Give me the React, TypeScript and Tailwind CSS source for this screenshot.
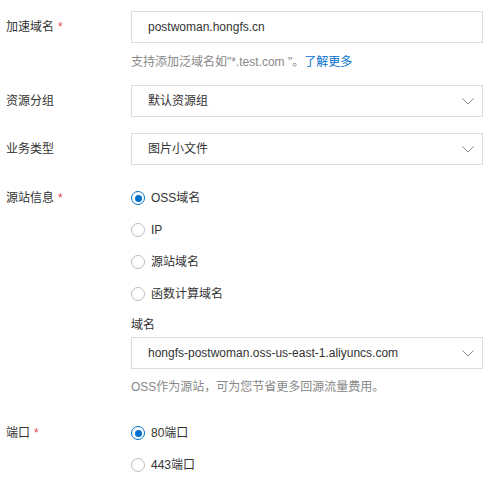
import { useState } from 'react';

const font = { fontFamily: '"Segoe UI", "Liberation Sans", "Noto Sans CJK SC", sans-serif' };

function Chevron() {
    return (
        <svg width="12" height="7" viewBox="0 0 12 7" className="text-[#8a8a8a]">
            <polyline points="0.5,0.5 6,6 11.5,0.5" fill="none" stroke="currentColor" strokeWidth="1" />
        </svg>
    );
}

function Label({ text, required }: { text: string; required?: boolean }) {
    return (
        <div className="w-[125px] shrink-0 h-8 flex items-center text-[12px] text-[#333]">
            {text}
            {required && <span className="ml-1 text-[#e5484d]">*</span>}
        </div>
    );
}

function Select({ value }: { value: string }) {
    return (
        <div className="h-8 w-[352px] border border-[#dcdcdc] bg-white flex items-center justify-between pl-4 pr-[8px] text-[12px] text-[#333]">
            <span>{value}</span>
            <Chevron />
        </div>
    );
}

function Radio({ label, checked, onClick }: { label: string; checked: boolean; onClick: () => void }) {
    return (
        <div onClick={onClick} className="h-8 flex items-center gap-[6px] text-[12px] text-[#333] cursor-pointer">
            <span className={`w-[14px] h-[14px] rounded-full border flex items-center justify-center ${checked ? 'border-[#0070cc] border-[1.5px]' : 'border-[#bdbdbd]'}`}>
                {checked && <span className="w-[7px] h-[7px] rounded-full bg-[#0070cc]" />}
            </span>
            {label}
        </div>
    );
}

export default function App() {
    const [origin, setOrigin] = useState('OSS域名');
    const [port, setPort] = useState('80端口');

    return (
        <div className="w-[500px] h-[480px] bg-white pl-[6px] pt-[11px] overflow-hidden" style={font}>
            {/* 加速域名 */}
            <div className="flex">
                <Label text="加速域名" required />
                <div>
                    <div className="h-8 w-[352px] border border-[#dcdcdc] flex items-center pl-4 text-[12px] text-[#333]">
                        postwoman.hongfs.cn
                    </div>
                    <div className="mt-[10px] leading-[18px] text-[12px] text-[#888]">
                        支持添加泛域名如"*.test.com "。<a className="text-[#0070cc]">了解更多</a>
                    </div>
                </div>
            </div>

            {/* 资源分组 */}
            <div className="flex mt-[14px]">
                <Label text="资源分组" />
                <Select value="默认资源组" />
            </div>

            {/* 业务类型 */}
            <div className="flex mt-4">
                <Label text="业务类型" />
                <Select value="图片小文件" />
            </div>

            {/* 源站信息 */}
            <div className="flex mt-[17px]">
                <Label text="源站信息" required />
                <div>
                    {['OSS域名', 'IP', '源站域名', '函数计算域名'].map((o) => (
                        <Radio key={o} label={o} checked={origin === o} onClick={() => setOrigin(o)} />
                    ))}
                    <div className="mt-[6px] leading-[18px] text-[12px] text-[#333]">域名</div>
                    <div className="mt-[3px]">
                        <Select value="hongfs-postwoman.oss-us-east-1.aliyuncs.com" />
                    </div>
                    <div className="mt-[9px] leading-[18px] text-[12px] text-[#888]">
                        OSS作为源站，可为您节省更多回源流量费用。
                    </div>
                </div>
            </div>

            {/* 端口 */}
            <div className="flex mt-[21px]">
                <Label text="端口" required />
                <div>
                    {['80端口', '443端口'].map((p) => (
                        <Radio key={p} label={p} checked={port === p} onClick={() => setPort(p)} />
                    ))}
                </div>
            </div>
        </div>
    );
}
